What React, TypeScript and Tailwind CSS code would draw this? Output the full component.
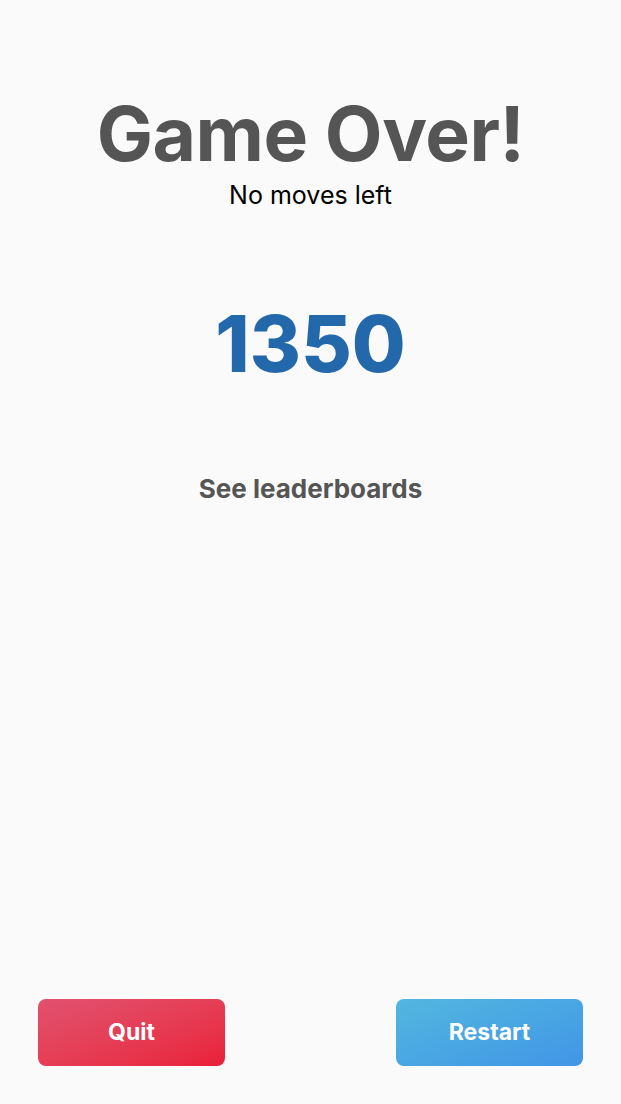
export default function App() {
  return (
    <div
      className="flex h-[1104px] w-full flex-col items-center bg-[#fafafa]"
      style={{ fontFamily: "Inter, 'Noto Sans', sans-serif" }}
    >
      <h1 className="mt-[96px] text-[75px] font-bold leading-none tracking-[-0.5px] text-[#555555]">
        Game Over!
      </h1>
      <p className="mt-[9px] text-[25px] leading-[30px] text-black">No moves left</p>
      <div className="mt-[95px] text-[78px] font-extrabold leading-none text-[#2268aa]">1350</div>
      <button className="mt-[93px] text-[26px] font-bold leading-none text-[#555555]">
        See leaderboards
      </button>
      <div className="mt-auto mb-[38px] flex w-full justify-between px-[38px]">
        <button className="flex h-[67px] w-[187px] items-center justify-center rounded-lg bg-gradient-to-br from-[#e1516f] to-[#e91f38] text-[23px] font-bold text-white">
          Quit
        </button>
        <button className="flex h-[67px] w-[187px] items-center justify-center rounded-lg bg-gradient-to-br from-[#52b7df] to-[#4295e6] text-[23px] font-bold text-white">
          Restart
        </button>
      </div>
    </div>
  );
}
